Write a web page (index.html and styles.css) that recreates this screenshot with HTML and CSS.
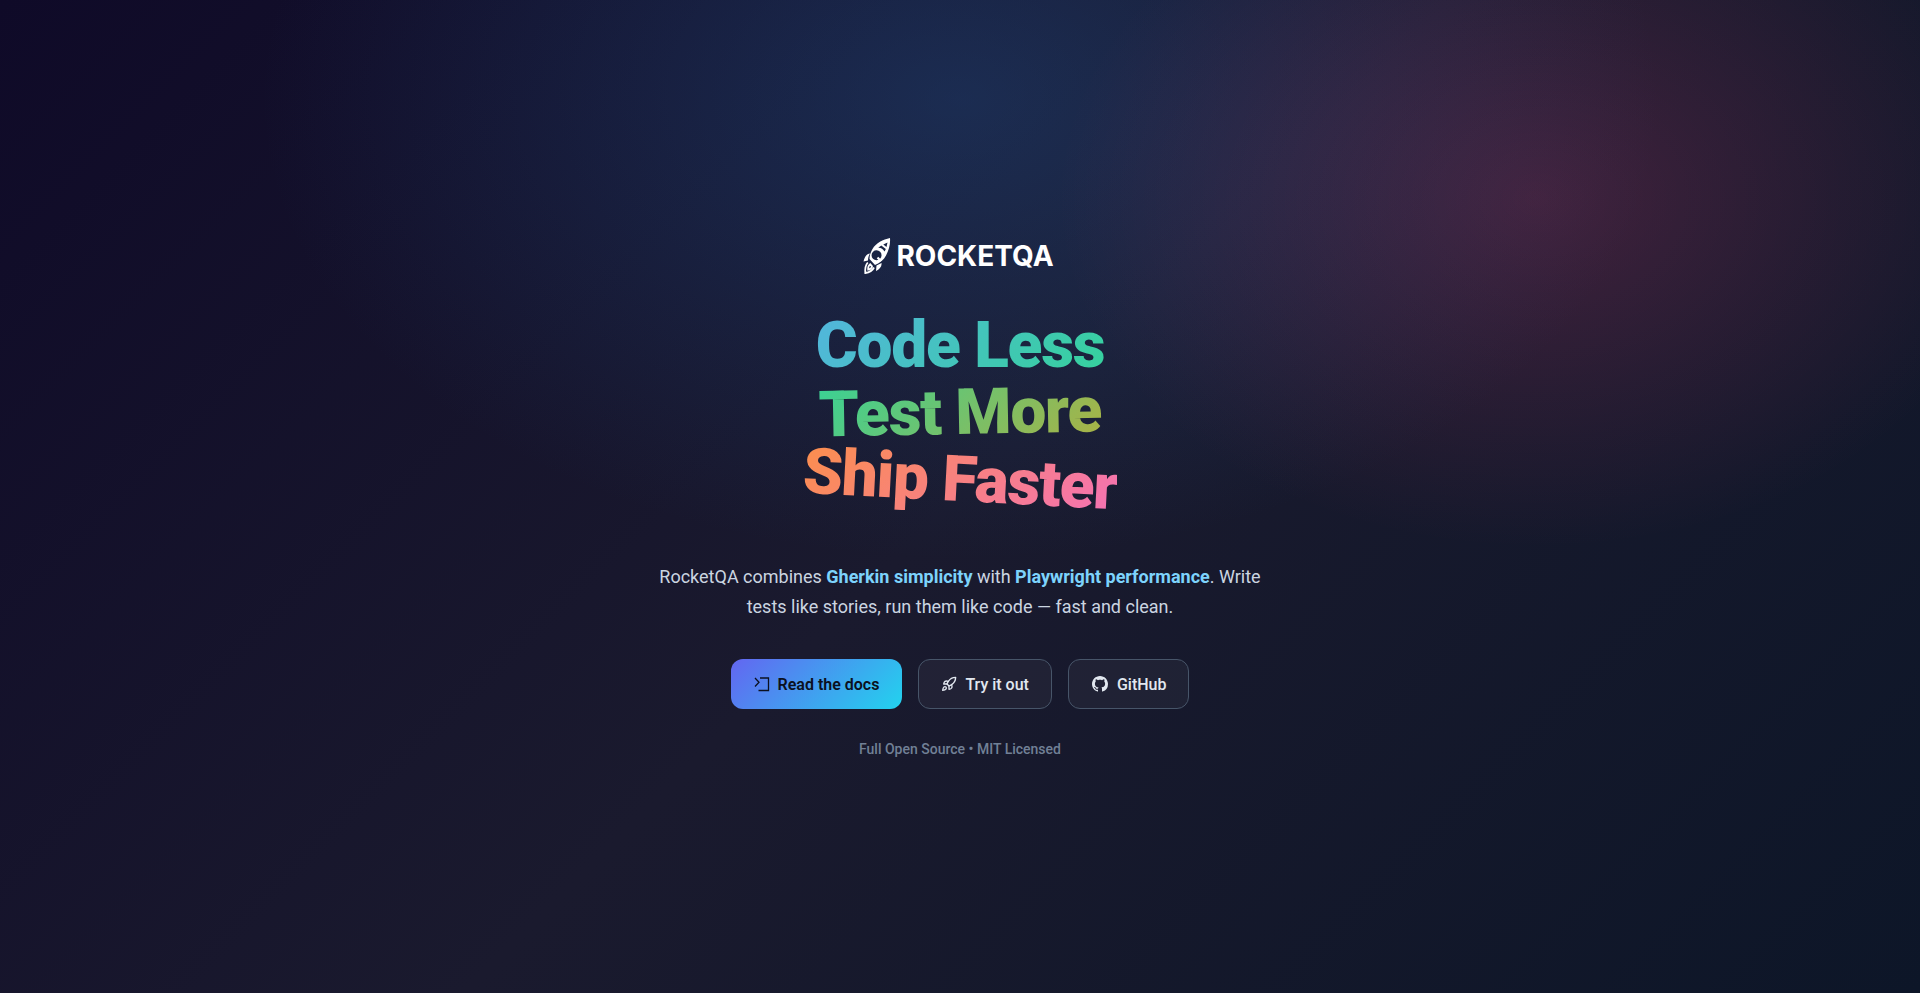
FILE: index.html
```html
<!DOCTYPE html>
<html lang="en">
<head>
    <meta charset="UTF-8">
    <meta name="viewport" content="width=device-width, initial-scale=1.0">
    <title>RocketQA</title>
    <link rel="stylesheet" href="styles.css">
</head>
<body>
    <main class="hero">
        <!-- Logo -->
        <div class="logo">
            <svg class="logo-mark" viewBox="0 0 28 38" aria-hidden="true">
                <path fill="#fff" fill-rule="evenodd" d="M27 1C20 2.500 13 6 9.500 12C8 14.500 6.500 18 6.500 22L12 28C17 26 21 22.500 23 18.500C26 13 27.500 7 27 1ZM24.500 5.500L23.500 10L20.300 7.600ZM18.300 8.400L22.800 12L21.600 14.500C20 12 18 10.500 15.200 10.700ZM13.600 13.200A5 5 0 1 1 13.500 23.200A5 5 0 1 1 13.600 13.200Z"/>
                <path fill="none" stroke="#fff" stroke-width="2.200" d="M14.500 20.500L18 24"/>
                <path fill="#fff" d="M7 16.500C3.500 17 1.500 20 .5 24.500L5 23.500C5 21 5.700 18.500 7 16.500ZM18.500 26L13.500 28.500L13 34C16.500 32 19 29.500 18.500 26Z"/>
                <path fill="none" stroke="#fff" stroke-width="1.800" d="M4.800 25.500C2.500 28 2 32 2.300 36C6 35.500 9.500 33.500 11 30.500M7.200 27.300C5.500 28.600 5 30.500 5.200 32.600C7 32.300 8.600 31.500 9 29.300Z"/>
            </svg>
            <span class="logo-text">ROCKETQA</span>
        </div>

        <!-- Headline -->
        <h1 class="headline">
            <span class="line line-code">Code Less</span>
            <span class="line line-test">Test More</span>
            <span class="line line-ship">Ship Faster</span>
        </h1>

        <p class="tagline">RocketQA combines <strong>Gherkin simplicity</strong> with <strong>Playwright performance</strong>. Write tests like stories, run them like code — fast and clean.</p>

        <!-- Buttons -->
        <div class="actions">
            <a class="btn btn-primary" href="#docs">
                <svg class="icon" viewBox="0 0 16 16" aria-hidden="true">
                    <path fill="none" stroke="currentColor" stroke-width="1.300" d="M1 2l4 4.300L1 10.500M6 2h8.500v12.500h-10"/>
                </svg>
                Read the docs
            </a>
            <a class="btn" href="#try">
                <svg class="icon" viewBox="0 0 24 24" aria-hidden="true">
                    <g fill="none" stroke="currentColor" stroke-width="2" stroke-linecap="round" stroke-linejoin="round">
                        <path d="M4.500 16.500c-1.500 1.260-2 5-2 5s3.740-.5 5-2c.71-.84.7-2.130-.09-2.910a2.180 2.180 0 0 0-2.910-.09z"/>
                        <path d="M12 15l-3-3a22 22 0 0 1 2-3.950A12.880 12.880 0 0 1 22 2c0 2.720-.78 7.500-6 11a22.350 22.350 0 0 1-4 2z"/>
                        <path d="M9 12H4s.55-3.030 2-4c1.620-1.080 5 0 5 0M12 15v5s3.030-.55 4-2c1.080-1.620 0-5 0-5"/>
                    </g>
                </svg>
                Try it out
            </a>
            <a class="btn" href="#github">
                <svg class="icon icon-github" viewBox="-1 -1 18 18" aria-hidden="true">
                    <path fill="currentColor" d="M8 0C3.580 0 0 3.580 0 8c0 3.540 2.290 6.530 5.470 7.590.4.070.55-.17.55-.38 0-.19-.01-.82-.01-1.490-2.010.37-2.530-.49-2.690-.94-.09-.23-.48-.94-.82-1.130-.28-.15-.68-.52-.01-.53.63-.01 1.080.58 1.230.82.72 1.210 1.870.87 2.330.66.07-.52.28-.87.51-1.070-1.780-.2-3.640-.89-3.640-3.950 0-.87.31-1.590.82-2.150-.08-.2-.36-1.020.08-2.120 0 0 .67-.21 2.200.82.64-.18 1.320-.27 2-.27s1.360.09 2 .27c1.530-1.040 2.200-.82 2.200-.82.44 1.100.16 1.920.08 2.120.51.56.82 1.270.82 2.150 0 3.070-1.870 3.750-3.650 3.950.29.25.54.73.54 1.480 0 1.070-.01 1.930-.01 2.200 0 .21.15.46.55.38A8.010 8.010 0 0 0 16 8c0-4.420-3.580-8-8-8z"/>
                </svg>
                GitHub
            </a>
        </div>

        <p class="note">Full Open Source • MIT Licensed</p>
    </main>
</body>
</html>
```
FILE: styles.css
```css
:root {
    --text-color: #cbd5e1;
    --accent-color: #7dd3fc;
    --muted-color: #718096;
    --button-border: #475569;
}

* {
    margin: 0;
    padding: 0;
    box-sizing: border-box;
}

body {
    font-family: Roboto, sans-serif;
    color: var(--text-color);
    min-height: 100vh;
    display: flex;
    justify-content: center;
    align-items: center;
    background:
        radial-gradient(480px 350px at 80% 20%, rgba(255, 72, 132, 0.18), transparent),
        radial-gradient(700px 460px at 50% 10%, rgba(36, 92, 160, 0.32), transparent),
        linear-gradient(135deg, #0f0a28 0%, #1a1a2e 50%, #0d1628 100%);
}

.hero {
    width: 100%;
    max-width: 640px;
    display: flex;
    flex-direction: column;
    align-items: center;
    text-align: center;
}

/* Logo */
.logo {
    display: flex;
    align-items: center;
    gap: 5px;
    height: 44px;
    padding-right: 3px;
    margin-bottom: 34px;
    color: #fff;
}

.logo-mark {
    width: 28px;
    height: 38px;
}

.logo-text {
    font-family: Inter, sans-serif;
    font-size: 28px;
    font-weight: 700;
}

/* Headline */
.headline {
    font-size: 64px;
    font-weight: 900;
    line-height: 67px;
    letter-spacing: -0.02em;
    margin-bottom: 49px;
}

.line {
    display: block;
    color: transparent;
    background-clip: text;
    -webkit-background-clip: text;
}

.line-code {
    background-image: linear-gradient(135deg, #54b4e0, #34d399);
}

.line-test {
    background-image: linear-gradient(135deg, #34d399, #b0b040);
    transform: rotate(-1deg);
}

.line-ship {
    background-image: linear-gradient(135deg, #fb8f4c, #f472b6);
    transform: rotate(3deg);
}

.tagline {
    font-size: 18px;
    line-height: 30px;
    margin-bottom: 37px;
}

.tagline strong {
    font-weight: 700;
    color: var(--accent-color);
}

/* Buttons */
.actions {
    display: flex;
    flex-wrap: wrap;
    justify-content: center;
    gap: 16px;
    margin-bottom: 30px;
}

.btn {
    display: inline-flex;
    align-items: center;
    gap: 8px;
    height: 50px;
    padding: 0 22px;
    border: 1px solid var(--button-border);
    border-radius: 12px;
    background: rgba(255, 255, 255, 0.04);
    color: #e2e8f0;
    font-size: 16px;
    font-weight: 500;
    text-decoration: none;
}

.btn-primary {
    padding: 0 23px;
    border: none;
    background: linear-gradient(135deg, #6366f1, #22d3ee);
    color: #0b1020;
    font-weight: 600;
}

.icon {
    width: 16px;
    height: 16px;
}

.icon-github {
    width: 18px;
    height: 18px;
}

.note {
    font-size: 14px;
    font-weight: 500;
    line-height: 20px;
    color: var(--muted-color);
}
```
